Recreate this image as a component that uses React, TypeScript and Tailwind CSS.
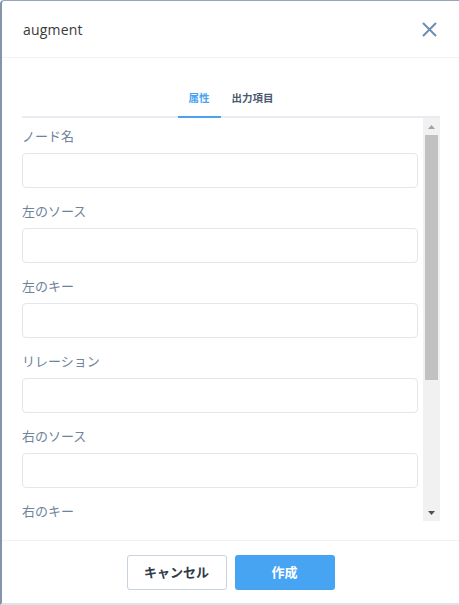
import React from "react"

const jp = { fontFamily: '"Open Sans", "Noto Sans CJK JP", sans-serif' }

const fields = [
  { label: "ノード名", extra: false },
  { label: "左のソース", extra: false },
  { label: "左のキー", extra: false },
  { label: "リレーション", extra: false },
  { label: "右のソース", extra: false },
  { label: "右のキー", extra: false },
]

function Field({ label }: { label: string }) {
  return (
    <div className="flex flex-none flex-col">
      <div className="mb-[7px] h-5 text-[13px] leading-5 text-[#70839c]">{label}</div>
      <div className="mb-[13px] h-[35px] w-full flex-none rounded-[4px] border border-[#e3e6ea] bg-white" />
    </div>
  )
}

function FakeScrollbar() {
  return (
    <div className="flex w-[17px] flex-none flex-col bg-[#f1f1f1]">
      <div className="flex h-[17px] flex-none items-center justify-center">
        <svg width="7" height="4" viewBox="0 0 7 4">
          <path d="M0 4 L3.5 0 L7 4 Z" fill="#a3a3a3" />
        </svg>
      </div>
      <div className="flex flex-1 flex-col px-[2px]">
        <div className="h-[245px] flex-none bg-[#c1c1c1]" />
      </div>
      <div className="flex h-[17px] flex-none items-center justify-center">
        <svg width="7" height="4" viewBox="0 0 7 4">
          <path d="M0 0 L7 0 L3.5 4 Z" fill="#505050" />
        </svg>
      </div>
    </div>
  )
}

export default function App() {
  return (
    <div
      className="flex h-[605px] w-[459px] flex-col overflow-hidden rounded-tl-[4px] border-b-2 border-l-2 border-t border-b-[#dfe3e8] border-l-[#8594a8] border-t-[#97a5b8] bg-white"
      style={jp}
    >
      {/* header */}
      <div className="flex h-[57px] flex-none items-center justify-between border-b border-[#f0f2f5] pl-[21px] pr-[22px]">
        <span className="text-[14px] tracking-[0.2px] text-[#3a3a3a]">augment</span>
        <svg width="15" height="15" viewBox="0 0 15 15">
          <path d="M1.5 1.5 L13.5 13.5 M13.5 1.5 L1.5 13.5" stroke="#6f8db3" strokeWidth="2" strokeLinecap="round" />
        </svg>
      </div>

      {/* body */}
      <div className="flex flex-none flex-col pb-[19px] pl-[20px] pr-[19px] pt-[33px]">
        <div className="flex flex-none justify-center border-b-2 border-[#e8edf3]">
          <div className="-mb-[2px] border-b-2 border-[#4aa3f0] px-[11px] pb-[11px] text-[10.5px] font-bold leading-[14px] text-[#4aa3f0]">
            属性
          </div>
          <div className="-mb-[2px] border-b-2 border-transparent px-[11px] pb-[11px] text-[10.5px] font-bold leading-[14px] text-[#4a5a70]">
            出力項目
          </div>
        </div>

        <div className="flex h-[403px] flex-none">
          <div className="flex flex-1 flex-col overflow-hidden pr-[5px] pt-[8px]">
            {fields.map((f) => (
              <Field key={f.label} label={f.label} />
            ))}
          </div>
          <FakeScrollbar />
        </div>
      </div>

      {/* footer */}
      <div className="flex flex-1 items-start justify-center gap-2 border-t border-[#f0f2f5] pt-[14px]">
        <button className="flex h-[35px] w-[100px] items-center justify-center rounded-[3px] border border-[#c9d3df] bg-white text-[13px] font-bold text-[#2e3a4a]">
          キャンセル
        </button>
        <button className="flex h-[35px] w-[100px] items-center justify-center rounded-[3px] bg-[#46a4f2] text-[13px] font-bold text-white">
          作成
        </button>
      </div>
    </div>
  )
}
